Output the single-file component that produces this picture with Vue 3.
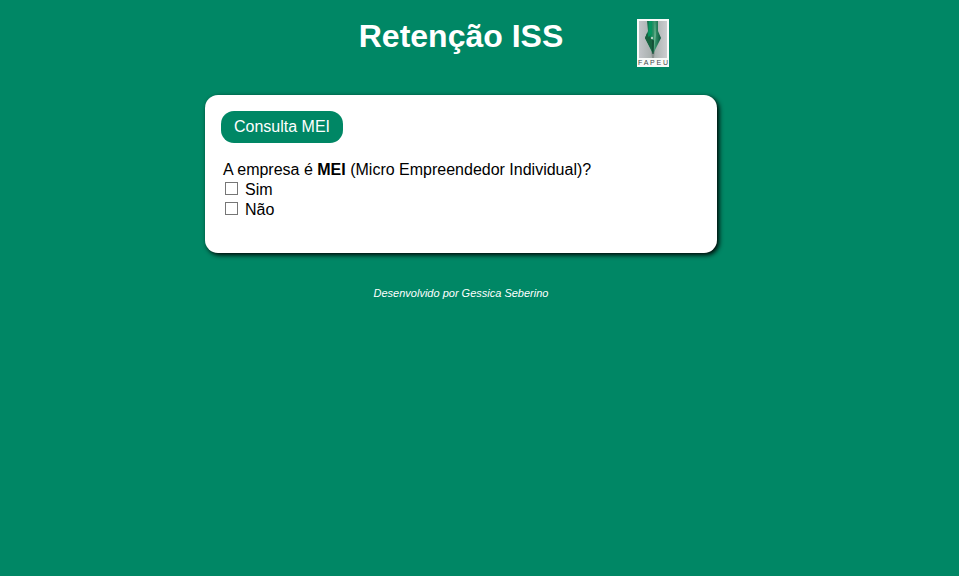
<script setup>
import { ref } from 'vue'

const answer = ref(null)
const options = [
  { id: 'mei-sim', label: 'Sim' },
  { id: 'mei-nao', label: 'Não' },
]

function choose(id) {
  answer.value = answer.value === id ? null : id
}
</script>

<template>
  <div class="page">
    <header class="header">
      <h1 class="title">Retenção ISS</h1>
      <svg class="logo" viewBox="0 0 32 48" role="img" aria-label="FAPEU">
        <defs>
          <linearGradient id="plate" x1="0" x2="1" y1="0" y2="0">
            <stop offset="0" stop-color="#c2c5c9" />
            <stop offset="0.5" stop-color="#a5adab" />
            <stop offset="1" stop-color="#cccdd0" />
          </linearGradient>
          <linearGradient id="nib" x1="0" x2="1" y1="0" y2="0">
            <stop offset="0" stop-color="#245e43" />
            <stop offset="0.35" stop-color="#078355" />
            <stop offset="0.6" stop-color="#3c9870" />
            <stop offset="1" stop-color="#07553a" />
          </linearGradient>
        </defs>
        <rect width="32" height="48" fill="#f8faf9" />
        <rect x="2" y="2" width="28" height="37" fill="url(#plate)" />
        <path d="M14 31h4l-1 8h-2z" fill="#89918f" />
        <path d="M10 2h11l0 10 3 7-8 16-8-16 3-7z" fill="url(#nib)" />
        <path d="M10 14l-2 5 8 15 1-12-5-5z" fill="#17613f" />
        <path d="M12 2h3l0 13-4 3z" fill="#06945f" />
        <path d="M18 2l1 14-2 16V19z" fill="#62ad88" />
        <path d="M16 21v14" stroke="#153f30" stroke-width="1" />
        <circle cx="15" cy="19" r="1.2" fill="#b5d4c3" />
        <text class="logo-name" x="16" y="46" text-anchor="middle">F A P E U</text>
      </svg>
    </header>

    <main class="card">
      <button type="button" class="tab">Consulta MEI</button>
      <fieldset class="question">
        <legend>A empresa é <strong>MEI</strong> (Micro Empreendedor Individual)?</legend>
        <div v-for="option in options" :key="option.id" class="option">
          <input
            :id="option.id"
            type="checkbox"
            :checked="answer === option.id"
            @change="choose(option.id)"
          />
          <label :for="option.id">{{ option.label }}</label>
        </div>
      </fieldset>
    </main>

    <footer class="footer">Desenvolvido por Gessica Seberino</footer>
  </div>
</template>

<style>
body {
  background: #008765;
}
</style>

<style scoped>
.page {
  box-sizing: border-box;
  display: flex;
  flex-direction: column;
  align-items: center;
  padding: 16px 37px 16px 0;
  font-family: Arial, "Liberation Sans", sans-serif;
  font-size: 16px;
  line-height: 20px;
  color: #000;
}

.header,
.card {
  box-sizing: border-box;
  width: 100%;
  max-width: 512px;
}

.header {
  display: grid;
  grid-template-columns: 1fr auto 1fr;
  align-items: start;
  padding: 0 48px;
}

.title {
  grid-column: 2;
  margin: 0;
  font-size: 32px;
  line-height: 40px;
  color: #fff;
}

.logo {
  display: block;
  justify-self: end;
  width: 32px;
  height: 48px;
  margin-top: 3px;
}

.logo-name {
  font-size: 7px;
  fill: #42474a;
}

.card {
  margin-top: 28px;
  padding: 16px 16px 33px;
  border-radius: 13px;
  background: #fff;
  box-shadow: 2px 2px 5px #000;
}

.tab {
  display: block;
  height: 32px;
  padding: 0 13px;
  border: 0;
  border-radius: 13px;
  background: #008765;
  color: #fff;
  font: inherit;
  cursor: pointer;
}

.question {
  min-width: 0;
  margin: 17px 0 0;
  padding: 0 2px;
  border: 0;
}

.question legend {
  padding: 0;
}

.option {
  display: flex;
  align-items: flex-start;
  gap: 7px;
  padding-left: 2px;
}

.option input {
  width: 13px;
  height: 13px;
  margin: 2px 0 0;
  border: 1px solid #767676;
  background: #fff;
  appearance: none;
}

.option input:checked {
  background: #008765;
  box-shadow: inset 0 0 0 2px #fff;
}

.footer {
  margin-top: 30px;
  font-size: 11px;
  font-style: italic;
  color: #fff;
}
</style>
